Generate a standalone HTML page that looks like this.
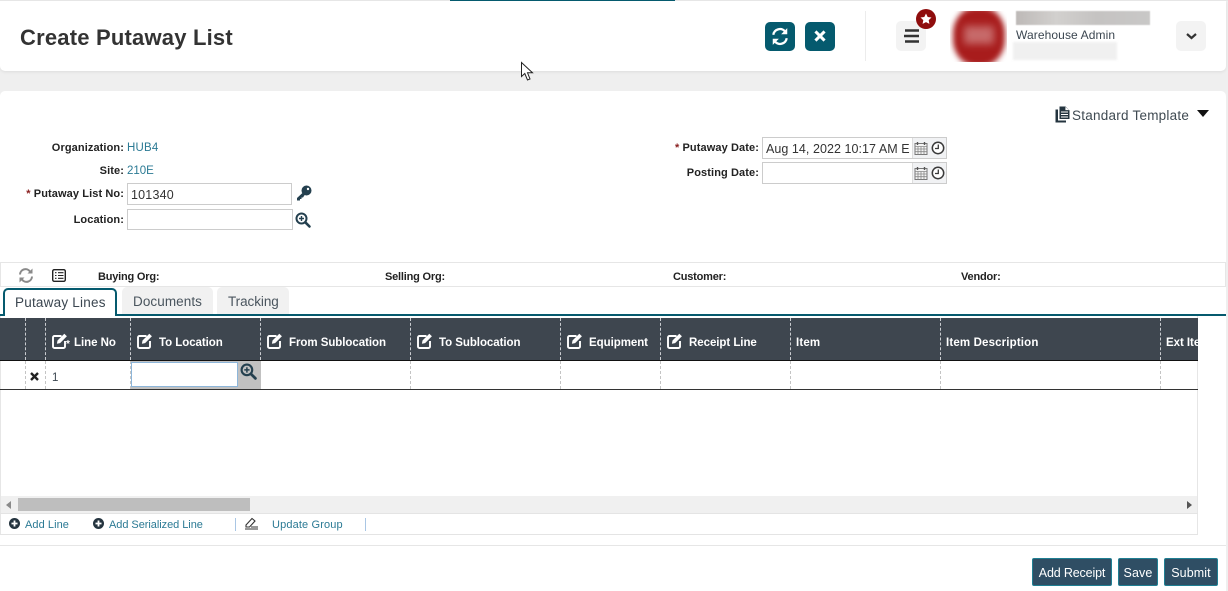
<!DOCTYPE html>
<html><head><meta charset="utf-8"><title>Create Putaway List</title>
<style>
html,body{margin:0;padding:0;width:1228px;height:591px;overflow:hidden;background:#efefef}
body{position:relative;font-family:"Liberation Sans",sans-serif;font-size:12px;color:#333}
.a,.t{position:absolute}
.t{white-space:nowrap;line-height:16px}
.b{font-weight:bold;color:#222;font-size:11px;letter-spacing:.1px}
.i{letter-spacing:-.2px}
.r{text-align:right}
.l{color:#2b7a94;font-size:11.5px;letter-spacing:.2px}
.h{color:#fff;font-weight:bold;font-size:11.5px;letter-spacing:-.05px;top:335px}
.inp{position:absolute;background:#fff;border:1px solid #ccc;box-sizing:border-box}
.vd{position:absolute;top:318px;width:0;height:42px;border-left:1px dashed #c9ccd0}
.vr{position:absolute;top:361px;width:0;height:28px;border-left:1px dashed #c4c4c4}
.btn{position:absolute;top:558px;height:28px;background:#2f4e64;border:1px solid #1f7f93;box-sizing:border-box;border-radius:2px;color:#fff;font-size:12.5px;line-height:28px;text-align:center;letter-spacing:.1px}
.tb{position:absolute;top:22px;width:30px;height:29px;background:#055a6e;border-radius:5px}
.gb{position:absolute;top:21px;width:30px;height:30px;background:#f3f3f3;border-radius:5px}
svg{position:absolute;overflow:visible}
</style></head><body>
<svg width="0" height="0" style="position:absolute"><defs>
<g id="edit"><path d="M9.500 3H2.500a1.500 1.500 0 0 0-1.500 1.500v9A1.500 1.500 0 0 0 2.500 15h9a1.500 1.500 0 0 0 1.500-1.500V8" fill="none" stroke="#fff" stroke-width="1.900"/><path d="M5.500 7.500 12.300 .7l2.600 2.600-6.800 6.800-3.200.6z" fill="#fff"/></g>
<g id="mag"><circle cx="6.500" cy="6.500" r="5" fill="none" stroke="#24404f" stroke-width="2"/><path d="M10.300 10.300 14.500 14.500" stroke="#24404f" stroke-width="2.600" stroke-linecap="round"/><path d="M6.500 4v5M4 6.500h5" stroke="#24404f" stroke-width="1.400"/></g>
<g id="cal"><rect x="1" y="2.500" width="12" height="11" fill="#f4f4f4" stroke="#777"/><path d="M1 5.500h12M1 8h12M1 10.700h12M4 5.500v8M7 5.500v8M10 5.500v8" stroke="#888" stroke-width=".8"/><path d="M3.500 1v3M10.500 1v3" stroke="#555" stroke-width="1.400"/></g>
<g id="clk"><circle cx="7" cy="7" r="5.700" fill="#fff" stroke="#3a3a3a" stroke-width="1.500"/><path d="M7.300 3.500v4H4" fill="none" stroke="#3a3a3a" stroke-width="1.300"/></g>
<g id="plus"><circle cx="5.500" cy="5.500" r="5.500" fill="#24343f"/><path d="M5.500 2.500v6M2.500 5.500h6" stroke="#fff" stroke-width="1.800"/></g>
</defs></svg>

<!-- header -->
<div class="a" style="left:0;top:1px;width:1226px;height:70px;background:#fff;border-radius:0 0 5px 5px;box-shadow:0 1px 3px rgba(0,0,0,.08)"></div>
<div class="a" style="left:0;top:0;width:1228px;height:1px;background:#e6e6e6"></div>
<div class="a" style="left:450px;top:0;width:225px;height:1px;background:#055a6e"></div>
<div class="t" style="left:20px;top:24px;font-size:22px;line-height:28px;font-weight:bold;color:#333;letter-spacing:.2px">Create Putaway List</div>

<div class="tb" style="left:765px"></div>
<svg style="left:771px;top:27px" width="18" height="19" viewBox="0 0 16 17"><path d="M2 7A6 6 0 0 1 12.500 4" fill="none" stroke="#fff" stroke-width="2"/><path d="M14.500 1v5.500H9z" fill="#fff"/><path d="M14 10A6 6 0 0 1 3.500 13" fill="none" stroke="#fff" stroke-width="2"/><path d="M1.500 16v-5.500H7z" fill="#fff"/></svg>
<div class="tb" style="left:805px"></div>
<svg style="left:814px;top:30px" width="12" height="12" viewBox="0 0 10 10"><path d="M1.200 1.200 8.800 8.800M8.800 1.200 1.200 8.800" stroke="#fff" stroke-width="2.500"/></svg>
<div class="a" style="left:865px;top:11px;width:1px;height:50px;background:#ececec"></div>
<div class="gb" style="left:896px"></div>
<svg style="left:904px;top:29px" width="15" height="14"><path d="M1 1.500h14M0 7h15M1 12.500h14" stroke="#333" stroke-width="2.400"/></svg>
<div class="a" style="left:916px;top:9px;width:20px;height:20px;background:#8f0d0d;border-radius:50%"></div>
<svg style="left:920px;top:13px" width="12" height="12" viewBox="0 0 12 12"><path d="M6 .5 7.700 4l3.800.5-2.800 2.600.7 3.800L6 9.100 2.600 10.900l.7-3.800L.5 4.500 4.300 4z" fill="#fff"/></svg>
<!-- avatar -->
<div class="a" style="left:950px;top:11px;width:57px;height:51px;background:#fff;overflow:hidden"><div class="a" style="left:3px;top:-4px;width:52px;height:59px;border-radius:45%;background:#a81c1c;filter:blur(3px)"></div><div class="a" style="left:14px;top:15px;width:30px;height:18px;background:#c76a6a;filter:blur(4px)"></div></div>
<div class="a" style="left:1016px;top:11px;width:134px;height:14px;background:linear-gradient(90deg,#bdb9b7,#d2d0ce 30%,#c5c3c2 60%,#c9c8c7);filter:blur(.6px)"></div>
<div class="t" style="left:1016px;top:27px;font-size:12px;letter-spacing:.1px;color:#3b4650">Warehouse Admin</div>
<div class="a" style="left:1013px;top:42px;width:104px;height:18px;background:#f0f0f0;filter:blur(1px)"></div>
<div class="gb" style="left:1176px"></div>
<svg style="left:1186px;top:33px" width="11" height="7"><path d="M1 1l4.500 4L10 1" fill="none" stroke="#333" stroke-width="2.200"/></svg>

<!-- cursor -->
<svg style="left:521px;top:62px" width="14" height="20" viewBox="0 0 14 20"><path d="M.5.500V14.500L3.800 11.500 6.500 18 9 17 6.500 10.800H11.500z" fill="#fff" stroke="#222" stroke-width="1"/></svg>

<!-- main panel -->
<div class="a" style="left:0;top:91px;width:1226px;height:500px;background:#fff;border-radius:5px 5px 0 0"></div>

<svg style="left:1055px;top:106px" width="15" height="17" viewBox="0 0 15 17"><path d="M4.500 .5h6l4 4v8.500h-10z" fill="#24343f"/><path d="M6 6h7M6 8.500h7M6 11h7" stroke="#fff" stroke-width="1"/><path d="M10 .5v4h4.500" fill="#fff" stroke="#24343f" stroke-width=".8"/><path d="M3 3.500H.5V16.500H11V14.500H3z" fill="#24343f"/></svg>
<div class="t" style="left:1072px;top:108px;font-size:13.500px;letter-spacing:.24px;color:#3f4a52">Standard Template</div>
<svg style="left:1197px;top:110px" width="12" height="7"><path d="M0 0h12L6 7z" fill="#111"/></svg>

<div class="t b r" style="right:1104px;top:140px">Organization:</div>
<div class="t l" style="left:127px;top:140px">HUB4</div>
<div class="t b r" style="right:1104px;top:163px">Site:</div>
<div class="t l" style="left:127px;top:163px;letter-spacing:0">210E</div>
<div class="t b r" style="right:1104px;top:186px"><span style="color:#8a2020">*</span> Putaway List No:</div>
<div class="inp" style="left:127px;top:183px;width:165px;height:22px"></div>
<div class="t" style="left:131px;top:187px;font-size:12.500px;letter-spacing:.2px;color:#333">101340</div>
<svg style="left:296px;top:185px" width="16" height="16" viewBox="0 0 16 16"><circle cx="10.500" cy="5.500" r="5" fill="#24404f"/><circle cx="12" cy="4" r="1.200" fill="#fff"/><path d="M7.500 7 1 13v2.500h3V14h1.500v-1.500H7L9 9.500z" fill="#24404f"/></svg>
<div class="t b r" style="right:1104px;top:212px">Location:</div>
<div class="inp" style="left:127px;top:209px;width:166px;height:21px"></div>
<svg style="left:295px;top:212px" width="16" height="16" viewBox="0 0 16 16"><use href="#mag"/></svg>

<div class="t b r" style="right:469px;top:140px"><span style="color:#8a2020">*</span> Putaway Date:</div>
<div class="inp" style="left:762px;top:137px;width:185px;height:22px;background:#fff"></div>
<div class="t" style="left:766px;top:141px;width:144px;overflow:hidden;font-size:12.500px;letter-spacing:.05px;color:#333">Aug 14, 2022 10:17 AM EDT</div>
<div class="a" style="left:912px;top:138px;width:34px;height:20px;background:#f1f2f4;border-left:1px solid #ddd;box-sizing:border-box"></div>
<svg style="left:914px;top:141px" width="14" height="14" viewBox="0 0 14 14"><use href="#cal"/></svg>
<svg style="left:931px;top:141px" width="14" height="14" viewBox="0 0 14 14"><use href="#clk"/></svg>
<div class="t b r" style="right:469px;top:165px">Posting Date:</div>
<div class="inp" style="left:762px;top:162px;width:185px;height:22px"></div>
<div class="a" style="left:912px;top:163px;width:34px;height:20px;background:#f1f2f4;border-left:1px solid #ddd;box-sizing:border-box"></div>
<svg style="left:914px;top:166px" width="14" height="14" viewBox="0 0 14 14"><use href="#cal"/></svg>
<svg style="left:931px;top:166px" width="14" height="14" viewBox="0 0 14 14"><use href="#clk"/></svg>

<!-- info bar -->
<div class="a" style="left:0;top:262px;width:1226px;height:25px;border:1px solid #e6e6e6;box-sizing:border-box"></div>
<svg style="left:18px;top:268px" width="16" height="15" viewBox="0 0 16 15"><path d="M2 6.500A5.500 5.500 0 0 1 12 3.500" fill="none" stroke="#8a8a8a" stroke-width="2"/><path d="M14.500 .5v5H9.500z" fill="#8a8a8a"/><path d="M14 8.500A5.500 5.500 0 0 1 4 11.500" fill="none" stroke="#8a8a8a" stroke-width="2"/><path d="M1.500 14.500v-5h5z" fill="#8a8a8a"/></svg>
<svg style="left:52px;top:269px" width="14" height="13" viewBox="0 0 14 13"><rect x=".7" y=".7" width="12.600" height="11.600" rx="1.500" fill="#fff" stroke="#222" stroke-width="1.400"/><path d="M3 3.700h1.500M6 3.700h5.500M3 6.500h1.500M6 6.500h5.500M3 9.300h1.500M6 9.300h5.500" stroke="#222" stroke-width="1.100"/></svg>
<div class="t b i" style="left:98px;top:269px">Buying Org:</div>
<div class="t b i" style="left:385px;top:269px">Selling Org:</div>
<div class="t b i" style="left:673px;top:269px">Customer:</div>
<div class="t b i" style="left:961px;top:269px">Vendor:</div>

<!-- tabs -->
<div class="a" style="left:0;top:314px;width:1226px;height:2px;background:#055a6e"></div>
<div class="a" style="left:3px;top:288px;width:114px;height:28px;box-sizing:border-box;background:#fff;border:2px solid #055a6e;border-bottom:none;border-radius:5px 5px 0 0"></div>
<div class="t" style="left:15px;top:295px;font-size:13.500px;letter-spacing:.22px;color:#3b4650">Putaway Lines</div>
<div class="a" style="left:122px;top:287px;width:91px;height:27px;background:#f1f1f1;border-radius:5px 5px 0 0"></div>
<div class="t" style="left:133px;top:294px;font-size:13.500px;letter-spacing:.08px;color:#4a555e">Documents</div>
<div class="a" style="left:217px;top:287px;width:72px;height:27px;background:#f1f1f1;border-radius:5px 5px 0 0"></div>
<div class="t" style="left:228px;top:294px;font-size:13.500px;letter-spacing:-.07px;color:#4a555e">Tracking</div>

<!-- grid -->
<div class="a" style="left:0;top:316px;width:1198px;height:219px;border-left:1px solid #e6e6e6;border-right:1px solid #e6e6e6;box-sizing:border-box;background:#fff"></div>
<div class="a" style="left:0;top:318px;width:1198px;height:42px;background:#3e464f"></div>
<div class="a" style="left:0;top:360px;width:1198px;height:1px;background:#111"></div>
<div class="a" style="left:0;top:389px;width:1198px;height:1px;background:#333"></div>

<div class="vd" style="left:25px"></div><div class="vd" style="left:45px"></div><div class="vd" style="left:130px"></div><div class="vd" style="left:260px"></div><div class="vd" style="left:410px"></div><div class="vd" style="left:560px"></div><div class="vd" style="left:660px"></div><div class="vd" style="left:790px"></div><div class="vd" style="left:940px"></div><div class="vd" style="left:1160px"></div>
<div class="vr" style="left:25px"></div><div class="vr" style="left:45px"></div><div class="vr" style="left:130px"></div><div class="vr" style="left:260px"></div><div class="vr" style="left:410px"></div><div class="vr" style="left:560px"></div><div class="vr" style="left:660px"></div><div class="vr" style="left:790px"></div><div class="vr" style="left:940px"></div><div class="vr" style="left:1160px"></div>

<svg style="left:52px;top:333px" width="15" height="15" viewBox="0 0 15 15"><use href="#edit"/></svg>
<div class="t h" style="left:66px;top:337px;font-size:10px">*</div>
<div class="t h" style="left:74px">Line No</div>
<svg style="left:137px;top:333px" width="15" height="15" viewBox="0 0 15 15"><use href="#edit"/></svg>
<div class="t h" style="left:159px">To Location</div>
<svg style="left:267px;top:333px" width="15" height="15" viewBox="0 0 15 15"><use href="#edit"/></svg>
<div class="t h" style="left:289px">From Sublocation</div>
<svg style="left:417px;top:333px" width="15" height="15" viewBox="0 0 15 15"><use href="#edit"/></svg>
<div class="t h" style="left:439px">To Sublocation</div>
<svg style="left:567px;top:333px" width="15" height="15" viewBox="0 0 15 15"><use href="#edit"/></svg>
<div class="t h" style="left:589px">Equipment</div>
<svg style="left:667px;top:333px" width="15" height="15" viewBox="0 0 15 15"><use href="#edit"/></svg>
<div class="t h" style="left:689px">Receipt Line</div>
<div class="t h" style="left:796px;letter-spacing:.15px">Item</div>
<div class="t h" style="left:946px;letter-spacing:.15px">Item Description</div>
<div class="a" style="left:1166px;top:335px;width:32px;height:16px;overflow:hidden"><div class="t h" style="left:0;top:0">Ext Item</div></div>

<svg style="left:30px;top:372px" width="9" height="9" viewBox="0 0 9 9"><path d="M1 1 8 8M8 1 1 8" stroke="#222" stroke-width="2.400"/></svg>
<div class="t" style="left:52px;top:370px;font-size:11.500px;color:#3b4650">1</div>
<div class="a" style="left:131px;top:361px;width:130px;height:28px;background:#c1c1c1"></div>
<div class="a" style="left:131px;top:362px;width:107px;height:25px;box-sizing:border-box;background:#fff;border:1px solid #8db6da"></div>
<svg style="left:240px;top:363px" width="17" height="17" viewBox="0 0 16 16"><use href="#mag"/></svg>

<!-- scrollbar -->
<div class="a" style="left:1px;top:496px;width:1196px;height:17px;background:#f0f0f0"></div>
<div class="a" style="left:18px;top:498px;width:232px;height:13px;background:#bebebe"></div>
<svg style="left:6px;top:501px" width="6" height="8"><path d="M5 0v8L0 4z" fill="#8a8a8a"/></svg>
<svg style="left:1187px;top:501px" width="6" height="8"><path d="M0 0v8l5-4z" fill="#555"/></svg>

<!-- footer bar -->
<div class="a" style="left:0;top:513px;width:1198px;height:1px;background:#e4e4e4"></div>
<div class="a" style="left:0;top:534px;width:1198px;height:1px;background:#e4e4e4"></div>
<svg style="left:9px;top:518px" width="11" height="11" viewBox="0 0 11 11"><use href="#plus"/></svg>
<div class="t" style="left:25px;top:517px;font-size:11px;letter-spacing:.07px;color:#2b7a94">Add Line</div>
<svg style="left:93px;top:518px" width="11" height="11" viewBox="0 0 11 11"><use href="#plus"/></svg>
<div class="t" style="left:109px;top:517px;font-size:11px;letter-spacing:-.05px;color:#2b7a94">Add Serialized Line</div>
<div class="a" style="left:235px;top:518px;width:1px;height:13px;background:#a9c6e4"></div>
<svg style="left:245px;top:517px" width="13" height="13" viewBox="0 0 13 13"><path d="M1 8 7 1.500l3 2.500L4.500 10H1z" fill="none" stroke="#333" stroke-width="1.100"/><path d="M0 12h13M6 10h7" stroke="#333" stroke-width="1.100"/></svg>
<div class="t" style="left:272px;top:517px;font-size:11px;letter-spacing:.14px;color:#2b7a94">Update Group</div>
<div class="a" style="left:365px;top:518px;width:1px;height:13px;background:#a9c6e4"></div>

<div class="a" style="left:0;top:545px;width:1226px;height:1px;background:#e6e6e6"></div>
<div class="btn" style="left:1032px;width:80px;letter-spacing:-.15px">Add Receipt</div>
<div class="btn" style="left:1118px;width:40px">Save</div>
<div class="btn" style="left:1164px;width:54px">Submit</div>
</body></html>
